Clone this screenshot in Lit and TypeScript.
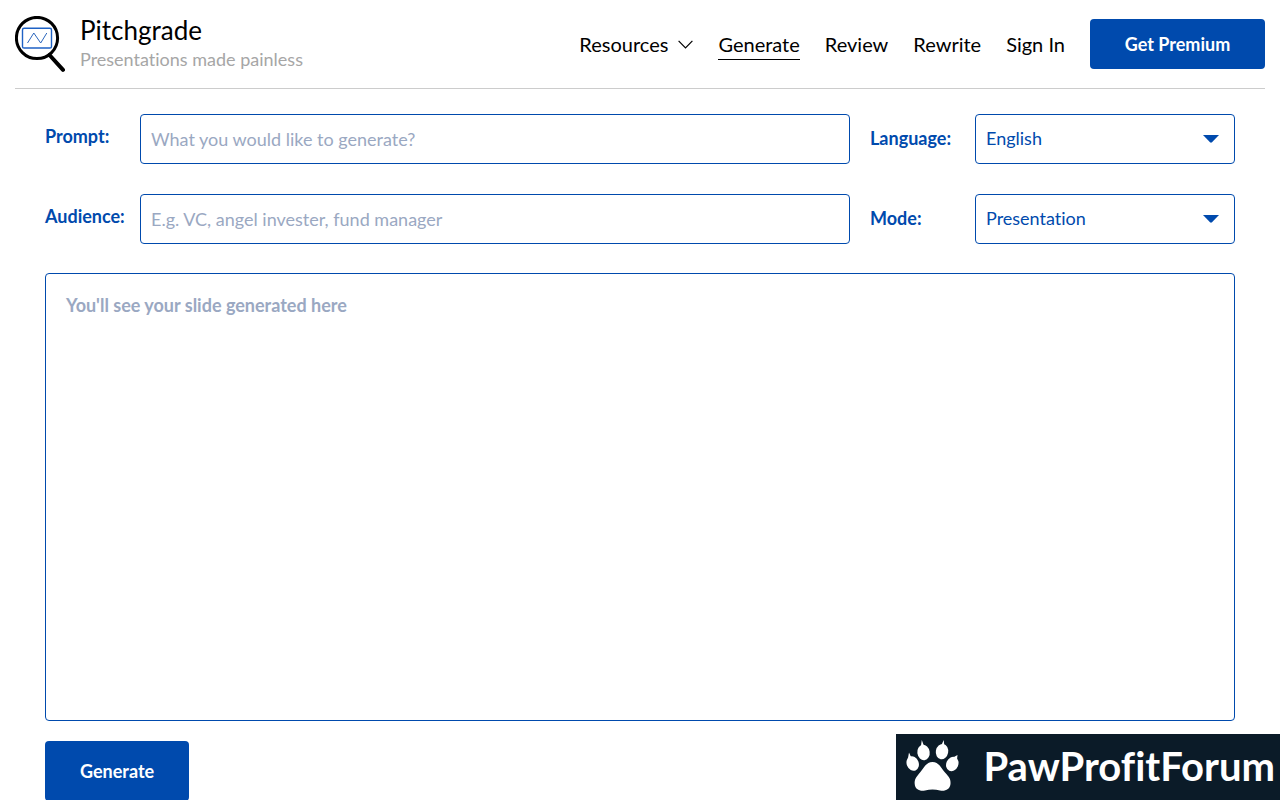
import { LitElement, html, css } from "lit";
import { customElement } from "lit/decorators.js";

@customElement("app-root")
export class AppRoot extends LitElement {
  static styles = css`
    :host {
      display: block;
      min-height: 100vh;
      overflow: hidden;
      background: #fff;
      color: #000;
      font-family: Lato, "Liberation Sans", sans-serif;
      font-size: 18px;
      line-height: 24px;
      font-variant-ligatures: none;
      --blue: #004aad;
    }
    * {
      box-sizing: border-box;
    }
    a {
      color: inherit;
      text-decoration: none;
    }
    .header {
      display: flex;
      align-items: center;
      justify-content: space-between;
      margin: 0 15px;
      height: 89px;
      border-bottom: 1px solid #ccc;
    }
    .brand {
      display: flex;
      align-items: center;
      gap: 15px;
    }
    .logo {
      display: block;
      width: 50px;
      height: 56px;
    }
    .wordmark {
      padding-bottom: 2px;
    }
    .name {
      display: block;
      font-size: 26px;
      line-height: 32px;
    }
    .tagline {
      display: block;
      color: #a6a6a6;
      line-height: 26px;
    }
    .nav {
      display: flex;
      align-items: center;
      gap: 25px;
      font-size: 20px;
    }
    .link {
      display: flex;
      align-items: center;
      gap: 10px;
      padding: 4px 0 3px;
      border: 0;
      border-bottom: 1px solid transparent;
      background: none;
      color: inherit;
      font: inherit;
      font-variant-ligatures: none;
    }
    .active {
      border-color: #000;
    }
    .chevron {
      width: 15px;
      height: 9px;
    }
    .primary {
      border: 0;
      border-radius: 4px;
      background: var(--blue);
      color: #fff;
      font: 700 18px/24px Lato, "Liberation Sans", sans-serif;
    }
    .premium {
      width: 175px;
      height: 50px;
    }
    .form {
      padding: 25px 45px 0;
    }
    .fields {
      display: grid;
      grid-template-columns: 95px minmax(0, 1fr) 105px 260px;
      row-gap: 30px;
      margin-bottom: 29px;
    }
    .label {
      color: var(--blue);
      font-weight: 700;
      padding-top: 10px;
    }
    .side {
      padding-top: 12px;
    }
    .input,
    .select,
    .output {
      display: block;
      width: 100%;
      border: 1px solid var(--blue);
      border-radius: 4px;
      background: #fff;
      color: var(--blue);
      font: inherit;
      font-variant-ligatures: none;
    }
    .input {
      height: 50px;
      padding: 0 10px;
    }
    .field {
      padding-right: 20px;
    }
    .input::placeholder,
    .output::placeholder {
      color: #9aa8c2;
      opacity: 1;
    }
    .picker {
      display: grid;
      align-items: center;
      height: 50px;
    }
    .picker > * {
      grid-area: 1 / 1;
    }
    .select {
      height: 100%;
      padding: 0 40px 2px 10px;
      appearance: none;
    }
    .arrow {
      justify-self: end;
      width: 16px;
      height: 8px;
      margin-right: 16px;
      pointer-events: none;
    }
    .output {
      height: 56vh;
      padding: 19px 20px;
      resize: none;
      font-weight: 700;
    }
    .generate {
      height: 60px;
      margin-top: 20px;
      padding: 0 35px;
    }
    .banner {
      position: fixed;
      right: 0;
      bottom: 0;
      display: flex;
      align-items: center;
      gap: 24px;
      height: 66px;
      padding: 0 5px 3px 10px;
      background: #0b1b28;
      color: #fff;
      font-size: 40px;
      line-height: 48px;
      font-weight: 700;
    }
    .paw {
      width: 53px;
      height: 52px;
    }
  `;

  render() {
    return html`
      <header class="header">
        <a class="brand" href="#">
          <svg class="logo" viewBox="0 0 50 56" fill="none" aria-hidden="true">
            <circle cx="22" cy="22" r="20.6" stroke="#000" stroke-width="3" />
            <path d="M34.5 39 48 53.8" stroke="#000" stroke-width="4" stroke-linecap="round" />
            <rect x="7.5" y="12.3" width="29" height="19.7" rx="1.6" stroke="#1f62c5" stroke-width="1.4" />
            <path d="M12.5 27 18.8 17 25.7 27 31.8 17" stroke="#2b66bd" stroke-width="1" />
          </svg>
          <span class="wordmark">
            <span class="name">Pitchgrade</span>
            <span class="tagline">Presentations made painless</span>
          </span>
        </a>
        <nav class="nav">
          <button class="link" type="button">
            Resources
            <svg class="chevron" viewBox="0 0 15 9" fill="none" aria-hidden="true">
              <path d="M.6.8 7.5 8 14.4.8" stroke="#000" stroke-width="1.2" />
            </svg>
          </button>
          <a class="link active" href="#">Generate</a>
          <a class="link" href="#">Review</a>
          <a class="link" href="#">Rewrite</a>
          <a class="link" href="#">Sign In</a>
          <button class="primary premium" type="button">Get Premium</button>
        </nav>
      </header>
      <main class="form">
        <div class="fields">
          <label class="label" for="prompt">Prompt:</label>
          <div class="field">
            <input class="input" id="prompt" placeholder="What you would like to generate?" />
          </div>
          <label class="label side" for="language">Language:</label>
          <div class="picker">
            <select class="select" id="language"><option>English</option></select>
            ${this.arrow()}
          </div>
          <label class="label" for="audience">Audience:</label>
          <div class="field">
            <input class="input" id="audience" placeholder="E.g. VC, angel invester, fund manager" />
          </div>
          <label class="label side" for="mode">Mode:</label>
          <div class="picker">
            <select class="select" id="mode"><option>Presentation</option></select>
            ${this.arrow()}
          </div>
        </div>
        <textarea class="output" aria-label="Generated slide" placeholder="You'll see your slide generated here"></textarea>
        <button class="primary generate" type="button">Generate</button>
      </main>
      <aside class="banner">
        <svg class="paw" viewBox="0 0 53 52" fill="#fff" aria-hidden="true">
          <path d="M26.5 22C33 22 35 28 39 32.500C43 37 45 39 44.500 44C44 49.500 39 51.500 34 50.500Q26.500 48.500 19 50.500C14 51.500 9 49.500 8.700 44C8.300 39 10.500 37 14 32.500C18 28 20 22 26.500 22Z" />
          <ellipse cx="17.500" cy="12.500" rx="6.200" ry="7.700" transform="rotate(-8 17.500 12.500)" />
          <ellipse cx="36" cy="11.700" rx="6.200" ry="7.700" transform="rotate(10 36 11.700)" />
          <ellipse cx="6.700" cy="23.500" rx="6" ry="7.500" transform="rotate(-22 6.700 23.500)" />
          <ellipse cx="46.300" cy="24" rx="6" ry="7.500" transform="rotate(24 46.300 24)" />
          <path d="M14.800 7 15.800 0 18 6ZM35.500 5 37.700 0 38.400 6ZM2 18 3 12.500 5.300 17.500ZM47 17.500 51.500 15 51 19.500Z" />
        </svg>
        <span>PawProfitForum</span>
      </aside>
    `;
  }

  private arrow() {
    return html`<svg class="arrow" viewBox="0 0 16 8" aria-hidden="true">
      <path d="M0 0H16L9 7.300Q8 8.200 7 7.300Z" fill="#004aad" />
    </svg>`;
  }
}
